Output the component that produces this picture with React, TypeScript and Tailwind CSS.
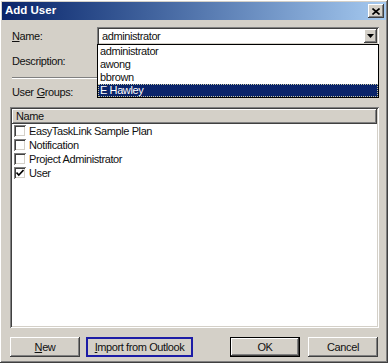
import React from "react";

const raised =
  "shadow-[inset_-1px_-1px_0_#404040,inset_1px_1px_0_#ffffff,inset_-2px_-2px_0_#808080,inset_2px_2px_0_#d4d0c8]";
const sunken =
  "shadow-[inset_1px_1px_0_#808080,inset_-1px_-1px_0_#ffffff,inset_2px_2px_0_#404040,inset_-2px_-2px_0_#d4d0c8]";

const users = ["administrator", "awong", "bbrown", "E Hawley"];
const groups = [
  { name: "EasyTaskLink Sample Plan", checked: false },
  { name: "Notification", checked: false },
  { name: "Project Administrator", checked: false },
  { name: "User", checked: true },
];

function CheckBox({ checked }: { checked: boolean }) {
  return (
    <span
      className={`relative flex h-[12px] w-[12px] shrink-0 items-center justify-center bg-white ${sunken}`}
    >
      {checked && (
        <svg width="8" height="8" viewBox="0 0 8 8" className="block">
          <path d="M0.5 3.5 L2.8 6 L7.5 1" stroke="#000" strokeWidth="1.6" fill="none" />
        </svg>
      )}
    </span>
  );
}

export default function App() {
  return (
    <div
      className={`flex h-[363px] w-[388px] flex-col whitespace-nowrap bg-[#d4d0c8] p-[2px] text-[11px] leading-none tracking-[-0.4px] text-[#111] ${raised}`}
      style={{ fontFamily: '"Liberation Sans", Arial, sans-serif' }}
    >
      {/* title bar */}
      <div className="flex h-[18px] shrink-0 items-center justify-between bg-gradient-to-r from-[#0a246a] to-[#a6caf0] pl-[3px] pr-[2px]">
        <span className="text-[11.5px] font-bold tracking-normal text-white">Add User</span>
        <button className={`flex h-[14px] w-[16px] items-center justify-center bg-[#d4d0c8] ${raised}`}>
          <svg width="8" height="7" viewBox="0 0 8 7" className="block">
            <path d="M0.5 0.5 L7.5 6.5 M7.5 0.5 L0.5 6.5" stroke="#000" strokeWidth="1.6" />
          </svg>
        </button>
      </div>

      <div className="flex flex-1 flex-col pl-[8px] pr-[7px]">
        {/* name */}
        <div className="mt-[7px] flex h-[18px] items-center">
          <span className="w-[87px] pl-[2px]">
            <u>N</u>ame:
          </span>
          <div className={`relative flex h-[18px] flex-1 items-center bg-white ${sunken}`}>
            <span className="pl-[5px]">administrator</span>
            <span
              className={`absolute right-[2px] top-[2px] flex h-[14px] w-[13px] items-center justify-center bg-[#d4d0c8] ${raised}`}
            >
              <svg width="7" height="4" viewBox="0 0 7 4" className="block">
                <path d="M0 0 H7 L3.5 4 Z" fill="#000" />
              </svg>
            </span>
            {/* open list */}
            <div className="absolute left-0 right-0 top-[17px] z-10 border border-black bg-white">
              {users.map((u, i) =>
                i === users.length - 1 ? (
                  <div
                    key={u}
                    className="flex h-[13px] items-center border border-dotted border-[#c8c8a0] bg-[#0a246a] pl-[1px] text-white"
                  >
                    {u}
                  </div>
                ) : (
                  <div key={u} className="flex h-[13px] items-center pl-[2px]">
                    {u}
                  </div>
                ),
              )}
            </div>
          </div>
        </div>

        {/* description */}
        <div className="mt-[7px] flex h-[18px] items-center">
          <span className="w-[87px] pl-[2px]">Description:</span>
          <div className={`h-[18px] flex-1 bg-white ${sunken}`} />
        </div>

        <div className="ml-[2px] mt-[7px] h-[2px] border-t border-b border-t-[#808080] border-b-white" />

        <div className="mt-[6px] flex h-[14px] items-center pl-[2px]">
          User <u className="ml-[3px]">G</u>roups:
        </div>

        {/* groups list */}
        <div className={`mt-[8px] flex h-[221px] flex-col bg-white p-[2px] ${sunken}`}>
          <div className={`flex h-[15px] shrink-0 items-center bg-[#d4d0c8] pl-[4px] ${raised}`}>Name</div>
          {groups.map((g) => (
            <div key={g.name} className="flex h-[14px] items-center gap-[3px] pl-[2px]">
              <CheckBox checked={g.checked} />
              <span>{g.name}</span>
            </div>
          ))}
        </div>

        {/* buttons */}
        <div className="mt-[9px] flex h-[20px] pr-[1px]">
          <button className={`flex w-[70px] items-center justify-center bg-[#d4d0c8] ${raised}`}>
            <span>
              <u>N</u>ew
            </span>
          </button>
          <button className="ml-[6px] flex w-[107px] items-center justify-center border-2 border-[#1c1ca6] bg-[#d4d0c8]">
            <span>
              <u>I</u>mport from Outlook
            </span>
          </button>
          <div className="flex-1" />
          <button
            className={`flex w-[70px] items-center justify-center border border-black bg-[#d4d0c8] ${raised}`}
          >
            OK
          </button>
          <button className={`ml-[8px] flex w-[70px] items-center justify-center bg-[#d4d0c8] ${raised}`}>
            Cancel
          </button>
        </div>
      </div>
    </div>
  );
}
